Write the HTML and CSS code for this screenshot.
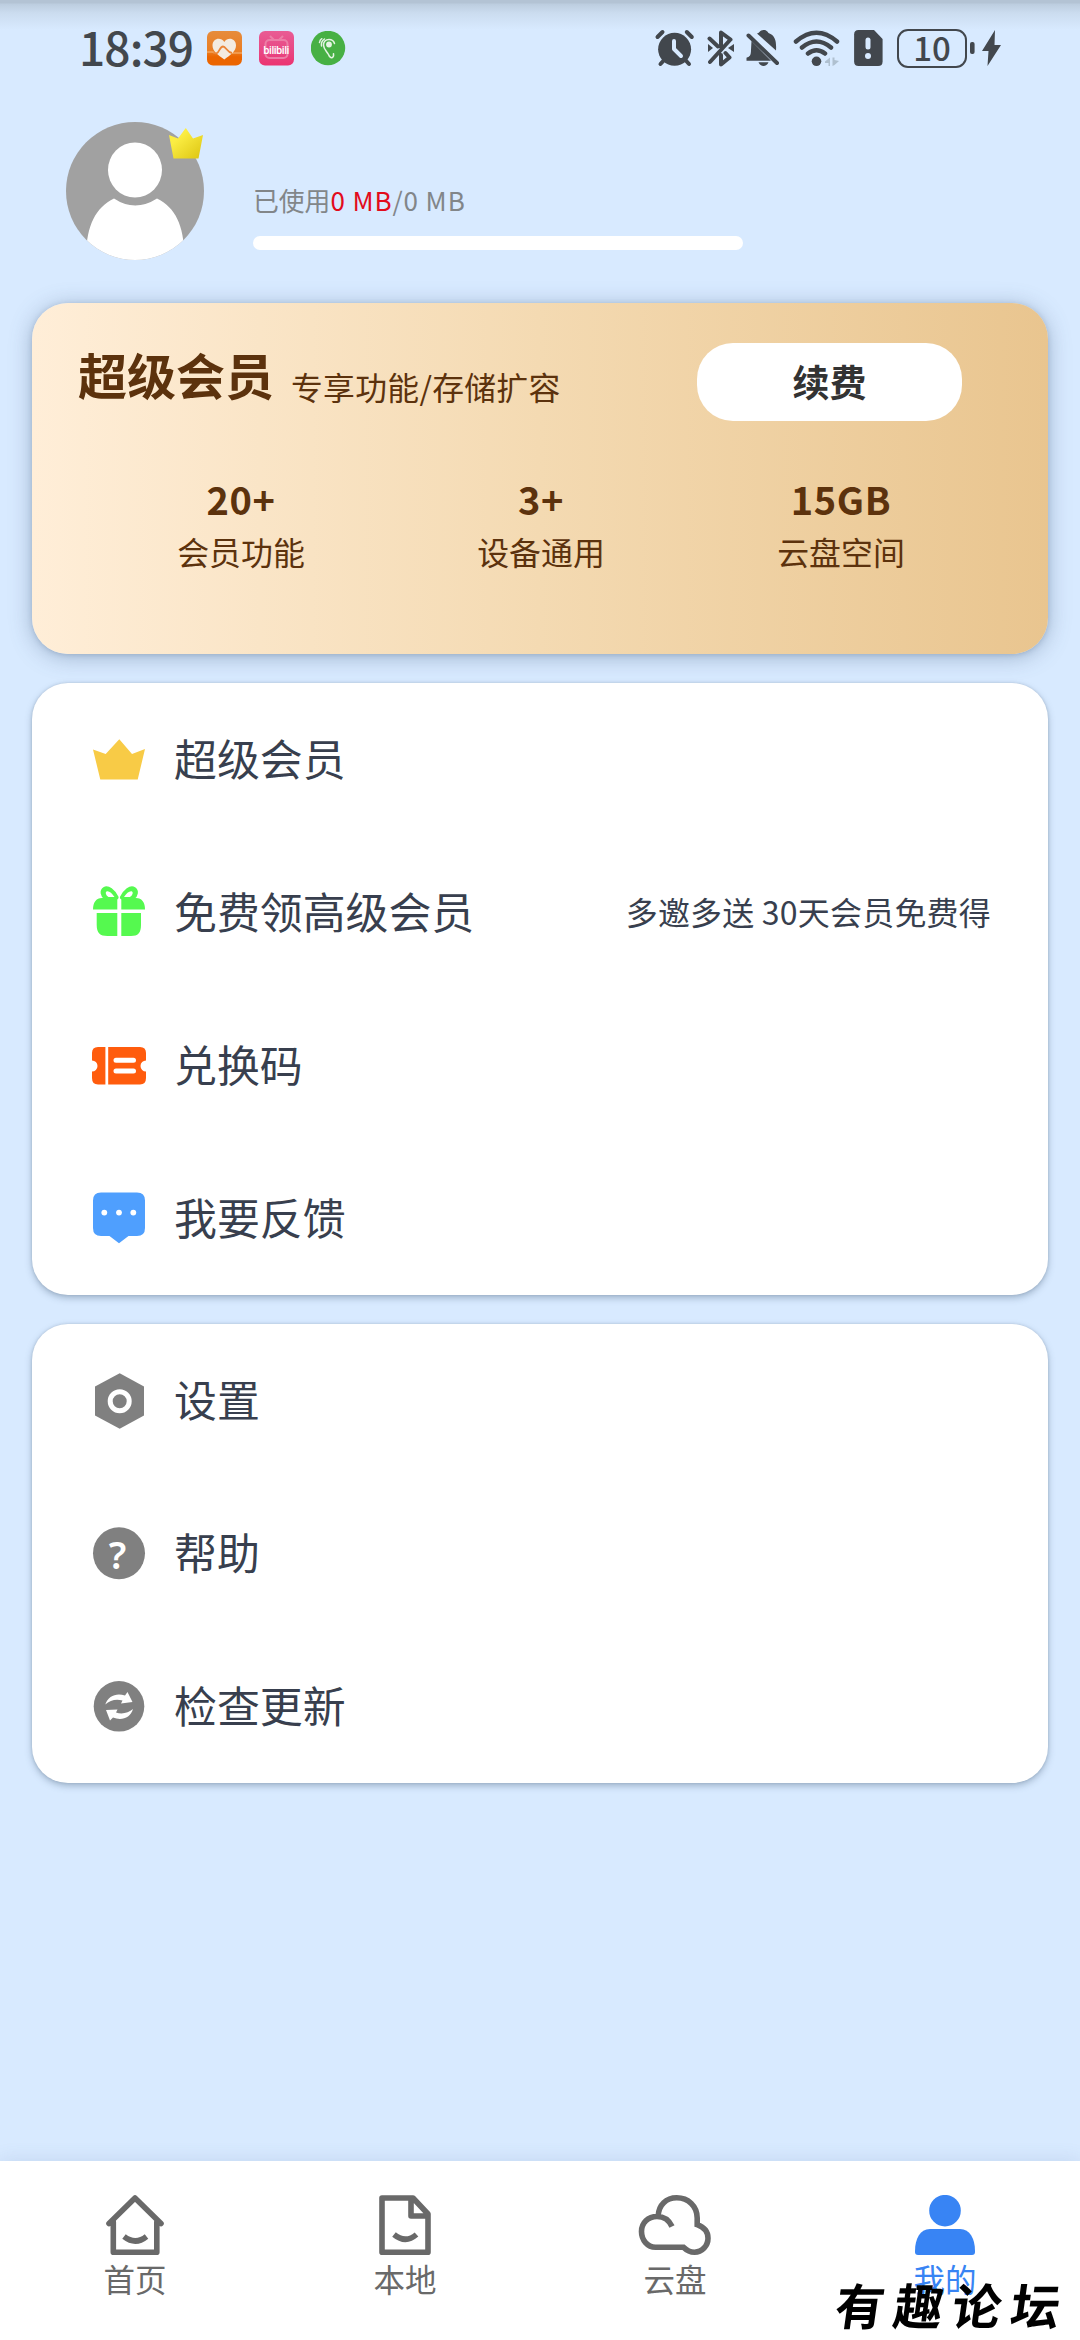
FILE: index.html
```html
<!DOCTYPE html>
<html lang="zh-CN">
<head>
<meta charset="utf-8">
<title>我的</title>
<link rel="stylesheet" href="styles.css">
</head>
<body>
<div class="screen">
  <header class="status">
    <div class="status-left">
      <span class="time">18:39</span>
      <svg class="app" viewBox="207 31 35 35">
        <defs><linearGradient id="or" x1="0" y1="0" x2="0" y2="1"><stop offset="0" stop-color="#e68c3c"/><stop offset=".6" stop-color="#ea7d22"/><stop offset=".75" stop-color="#eb6500"/></linearGradient></defs>
        <rect x="207" y="31" width="35" height="34.500" rx="6" fill="url(#or)"/>
        <path d="M207 52h5c3 0 3 2 5 1M232 53h10" fill="none" stroke="#f3a45c" stroke-width="1.600"/>
        <path d="M224.300 59.500C218 55 212.500 51 212.500 45.500 212.500 38 221 36.500 224.300 42 227.500 36.500 236 38 236 45.500 236 51 230.500 55 224.300 59.500Z" fill="#f3ebe0"/>
        <path d="M213.500 52.500q2 1.500 3.500.5c2.500-1.500 3-6.500 6-6.500s4 6 9 6.500" fill="none" stroke="#ea8436" stroke-width="1.800"/>
      </svg>
      <svg class="app" viewBox="259 31 35 35">
        <defs><linearGradient id="pk" x1="0" y1="0" x2="0" y2="1"><stop offset="0" stop-color="#e95c94"/><stop offset=".6" stop-color="#e84683"/><stop offset="1" stop-color="#ec3370"/></linearGradient></defs>
        <rect x="259" y="31" width="35" height="34.500" rx="6" fill="url(#pk)"/>
        <path d="M270 36l4 4m9-4l-4 4" stroke="#ec7ea7" stroke-width="2"/>
        <rect x="265.500" y="40" width="22" height="18" rx="4" fill="none" stroke="#ec7ea7" stroke-width="2"/>
        <text class="bili" x="276.300" y="54" text-anchor="middle" textLength="26">bilibili</text>
      </svg>
      <svg class="app" viewBox="311 31 35 35">
        <circle cx="328" cy="48" r="17.200" fill="#47b044"/>
        <g fill="none" stroke="#e5f4e3" stroke-width="1.500" stroke-linecap="round"><path d="M334.500 43.500c-1-3.500-4-4-5.500-4-3.500 0-5.500 2.500-5.500 5.500 0 4 3 6 5 9.500 1 2.500 2 3.500 3.500 3.200 1.300-.3 1.800-2 1.500-4"/><path d="M321.500 46c-.5-3 .8-5.500 3-7M319.500 42.500c.3-2 1.300-3.300 2.300-3.800"/></g>
        <circle cx="329" cy="44.500" r="2.900" fill="#e5f4e3"/>
      </svg>
    </div>
    <div class="status-right">
      <svg class="s-alarm" viewBox="653 28 41 40">
        <circle cx="673.600" cy="49.300" r="16.500" fill="#42474d"/>
        <path d="M656.500 37l5-5M690.800 37l-5-5M664 59l-4.500 5M683.500 59l4.500 5" stroke="#42474d" stroke-width="4" stroke-linecap="round"/>
        <path d="M673 41v8l7 7" fill="none" stroke="#d8eaff" stroke-width="4" stroke-linecap="round" stroke-linejoin="round"/>
      </svg>
      <svg class="s-bt" viewBox="706 28 28 40">
        <path d="M708.500 38.500l8.500 8M720 47V32.500l9.500 7-20.500 22.500M720 55v9.500l8.500-7-4-4.500" fill="none" stroke="#42474d" stroke-width="4" stroke-linecap="round" stroke-linejoin="round"/>
        <path d="M707 44v8l5-4zM733 44v8l-6-4z" fill="#42474d"/>
      </svg>
      <svg class="s-bell" viewBox="745 28 34 40">
        <path d="M756 33.500c2 0 3-3.500 6.500-3.500s4 2 5 3c7 2.500 8 8.500 7.500 17.500zM750.500 41l19.500 19.800h-24.500v-3c3-1 4.500-2 4.500-8z" fill="#42474d"/>
        <path d="M747.500 35.500l28.500 27.500" stroke="#42474d" stroke-width="4" stroke-linecap="round"/>
        <path d="M757.500 62.200h10c-2 5-8 5-10 0z" fill="#42474d"/>
      </svg>
      <svg class="s-wifi" viewBox="791 28 48 40">
        <circle cx="815.500" cy="61.300" r="4.800" fill="#42474d"/>
        <path d="M795 41.500q20.500-17.500 41 0M801 47.500q14.500-12 29 0M807 53.500q8.500-6.500 17 0" fill="none" stroke="#42474d" stroke-width="4.500" stroke-linecap="round"/>
        <path d="M829 57.500v8.500h-1.500v-3h-3.500v-1.500zM831.500 66v-8.500h2v2.500l4.500 1-4.500 4z" fill="#afc0d0"/>
      </svg>
      <svg class="s-sim" viewBox="852 28 31 40">
        <path d="M857.500 30H873l8.600 9v22.500q0 4.500-4.500 4.500h-19.500q-4.500 0-4.500-4.500V34.500q0-4.500 4.400-4.500z" fill="#42474d"/>
        <path d="M867 40v7" stroke="#d8eaff" stroke-width="5" stroke-linecap="round"/><circle cx="867" cy="56" r="3" fill="#d8eaff"/>
      </svg>
      <span class="battery">10</span>
      <svg class="s-bolt" viewBox="968 28 33 40">
        <rect x="969" y="42" width="4.600" height="12" rx="2" fill="#42474d"/>
        <path d="M994 30l-13 21h6.500l-1 15 13.500-21h-6.500z" fill="#42474d"/>
      </svg>
    </div>
  </header>

  <section class="profile">
    <div class="avatar">
      <svg viewBox="0 0 138 138" width="138" height="138">
        <defs><clipPath id="av"><circle cx="69" cy="69" r="69"/></clipPath></defs>
        <g clip-path="url(#av)"><path d="M0 0h138v138H0z" fill="#a1a1a1"/>
        <path d="M48 76.500Q69 90.500 91 76.500C110 86 118.500 104 118.500 138H20C20 104 29 86 48 76.500Z" fill="#fff"/>
        <ellipse cx="69" cy="48" rx="27" ry="27.500" fill="#fff"/></g>
      </svg>
      <svg class="avatar-crown" viewBox="0 0 34 31">
        <defs><linearGradient id="cr" x1="0" y1="0" x2="1" y2="1"><stop offset=".3" stop-color="#fbed43"/><stop offset="1" stop-color="#dcc410"/></linearGradient></defs>
        <path d="M0 7l9 3.500L16.800 0 24 10.500 34 7l-4.500 23.500H4.500z" fill="url(#cr)"/>
      </svg>
    </div>
    <div class="usage">
      <p class="usage-text">已使用<span class="latin"><em>0 MB</em>/0 MB</span></p>
      <div class="bar"></div>
    </div>
  </section>

  <section class="vip">
    <div class="vip-head">
      <h1>超级会员</h1>
      <p>专享功能/存储扩容</p>
      <button class="renew">续费</button>
    </div>
    <div class="stats">
      <div class="stat"><b>20+</b><span>会员功能</span></div>
      <div class="stat"><b>3+</b><span>设备通用</span></div>
      <div class="stat"><b>15GB</b><span>云盘空间</span></div>
    </div>
  </section>

  <section class="list">
    <div class="row">
      <svg viewBox="0 0 56 56"><path d="M28.300 7.300L41 22l13-5-7.300 30.500H9.300L2 17.500 14.700 22z" fill="#f8cb46"/></svg>
      <span>超级会员</span>
    </div>
    <div class="row">
      <svg viewBox="0 0 56 56">
        <g fill="#55f94f"><path d="M2 24.500c0-7 3-11.500 9-11.500h15.300v11.500zM30.300 24.500V13H45c6 0 9 4.500 9 11.500zM5.700 28h20.600v23H16.500C9 51 5.700 48 5.700 40zM30.300 28H50v12c0 8-3 11-10 11h-9.700z"/></g>
        <path d="M25.500 12.500C22 6 17 2 13.500 4c-3 2-2 6 1 8.500zM31 12.500C34.500 6 39.500 2 43 4c3 2 2 6-1 8.500z" fill="#55f94f" stroke="#55f94f" stroke-width="4.200" stroke-linejoin="round"/>
        <path d="M23.500 12c-2.500-4-6-6.500-8-5.500-1.500 1-.5 4 2 5.500zM33 12c2.500-4 6-6.500 8-5.500 1.500 1 .5 4-2 5.500z" fill="#fff"/>
      </svg>
      <span>免费领高级会员</span><span class="note">多邀多送 30天会员免费得</span>
    </div>
    <div class="row">
      <svg viewBox="0 0 56 56">
        <path d="M7 9h42q6 0 6 6v7.500a5.500 5.500 0 0 0 0 11V40q0 6.500-6 6.500H7q-6 0-6-6.500v-6.500a5.500 5.500 0 0 0 0-11V15q0-6 6-6z" fill="#ff5c0d"/>
        <path d="M15.800 9v38" stroke="#fff" stroke-width="2.800"/><path d="M25 22.200h17.500M25 33h17.500" stroke="#fff" stroke-width="5" stroke-linecap="round"/>
      </svg>
      <span>兑换码</span>
    </div>
    <div class="row">
      <svg viewBox="0 0 56 56"><path d="M10 1.500h36q8 0 8 8V37q0 8-8 8h-8.500L28 52.300 18.500 45H10q-8 0-8-8V9.500q0-8 8-8z" fill="#4f9ffe"/><g fill="#fff"><circle cx="13.300" cy="21.600" r="2.900"/><circle cx="28" cy="21.600" r="2.900"/><circle cx="42.300" cy="21.600" r="2.900"/></g></svg>
      <span>我要反馈</span>
    </div>
  </section>

  <section class="list">
    <div class="row">
      <svg viewBox="0 0 56 56"><path d="M28.700 .2L53 13.500v29L28.700 55.700 4 42.500v-29z" fill="#808080"/><circle cx="28.700" cy="28.200" r="9.500" fill="none" stroke="#fff" stroke-width="5"/></svg>
      <span>设置</span>
    </div>
    <div class="row">
      <svg viewBox="0 0 56 56"><circle cx="28" cy="27.300" r="26" fill="#808080"/><text class="mark" x="26.500" y="42.500" text-anchor="middle">?</text></svg>
      <span>帮助</span>
    </div>
    <div class="row">
      <svg viewBox="0 0 56 56"><circle cx="28" cy="27.300" r="25.300" fill="#808080"/><path d="M14.300 25.500C17 16.500 26 13.500 34 16.500L36.500 13 41.500 23 30 24.500 31.500 21.500C25.500 19.500 19 21 14.300 25.500ZM42 30C39.500 39 30.500 42 22 38.500L19 41.500 15 31 26.500 30.500 25 33.500C31 35.500 37.500 34 42 30Z" fill="#fff"/></svg>
      <span>检查更新</span>
    </div>
  </section>

  <nav class="tabs">
    <div class="tab">
      <svg viewBox="105 2195 60 60"><g fill="none" stroke="#696969" stroke-width="5.600" stroke-linecap="round" stroke-linejoin="round"><path d="M109 2223.500l26-25.500 26 25.500M113.300 2222v30.200h43.500V2222"/><path d="M124 2236.500q11.500 9 22.500 0" stroke-linecap="butt"/></g></svg>
      <span>首页</span>
    </div>
    <div class="tab">
      <svg viewBox="375 2195 60 60"><g fill="none" stroke="#696969" stroke-width="5.600" stroke-linejoin="round"><path d="M382 2198h31l15 16v38.200h-46zM411 2198v18h17"/><path d="M394 2234.500q11.500 9.500 22.500 0"/></g></svg>
      <span>本地</span>
    </div>
    <div class="tab">
      <svg class="wide" viewBox="637 2195 76 60"><path d="M672 2226.500c-3-6.500-8.500-10-15-10-9 0-15.500 6.500-15.500 15s6 15.700 14 15.700H683.500c3.500 3.500 7 5 11 5 7.500 0 13.500-6.500 13.500-14 0-6-4-11-10.800-13.500V2218c0-12-9-20.200-20.500-20.200-10.500 0-18 7-18.500 18" fill="none" stroke="#696969" stroke-width="5.600"/></svg>
      <span>云盘</span>
    </div>
    <div class="tab active">
      <svg viewBox="915 2195 60 60"><g fill="#3884f4"><circle cx="945" cy="2210.700" r="15.800"/><path d="M930 2229h30c10 0 15 10 15 22v1q0 3-3 3h-54q-3 0-3-3v-1c0-12 5-22 15-22z"/></g></svg>
      <span>我的</span>
    </div>
    <div class="watermark">有趣论坛</div>
  </nav>
</div>
</body>
</html>
```
FILE: styles.css
```css
* { box-sizing: border-box; margin: 0; padding: 0; }
body { background: #d8eaff; font-family: "Noto Sans CJK SC", "Noto Sans", sans-serif; }
svg { display: block; flex: none; }

.screen {
  width: 1080px; height: 2340px; overflow: hidden;
  display: flex; flex-direction: column;
  background: linear-gradient(#b3c3d4 0, #b3c3d4 3px, #bccddf 4px, #cbdcef 13px, #d8eaff 30px);
}

.status { height: 96px; flex: none; display: flex; justify-content: space-between; padding: 0 78px 0 79px; }
.status-left { display: flex; align-items: center; gap: 17px; height: 97px; }
.time { width: 111px; font-size: 46px; font-weight: 500; line-height: 92px; padding-bottom: 5px; letter-spacing: -0.9px; color: #42474d; white-space: nowrap; }
.app { width: 35px; height: 35px; }
.bili { font: 600 10px "Noto Sans", sans-serif; fill: #fff; }
.status-right { display: flex; align-items: center; height: 96px; }
.s-alarm { width: 41px; height: 40px; }
.s-bt { width: 28px; height: 40px; margin-left: 12px; }
.s-bell { width: 34px; height: 40px; margin-left: 11px; }
.s-wifi { width: 48px; height: 40px; margin-left: 12px; }
.s-sim { width: 31px; height: 40px; margin-left: 13px; }
.battery {
  width: 70px; height: 39px; margin: 0 2px 0 13px; border: 2.5px solid #42474d; border-radius: 11px;
  font-size: 33px; font-weight: 500; line-height: 32px; text-align: center; color: #42474d;
}
.s-bolt { width: 33px; height: 40px; }

.profile { height: 207px; flex: none; display: flex; padding: 26px 0 0 66px; }
.avatar { position: relative; width: 138px; height: 138px; }
.avatar-crown { position: absolute; left: 103px; top: 6px; width: 34px; height: 31px; }
.usage { width: 490px; margin-left: 49px; padding-top: 59px; }
.usage-text { height: 38px; line-height: 38px; font-size: 25.800px; color: #828689; white-space: nowrap; }
.usage-text em { font-style: normal; color: #e20c1c; }
.latin { font-size: 26px; letter-spacing: 0.9px; }
.bar { height: 14px; margin-top: 17px; border-radius: 7px; background: #fff; }

.vip {
  height: 351px; flex: none; margin: 0 32px; border-radius: 36px; padding: 40px 86px 0 46px; color: #5c320d;
  background: linear-gradient(90deg, #ffeed8, #f4dab2 50%, #e9c58f);
  box-shadow: 0 3px 22px rgba(80, 105, 135, .42), 0 1px 5px rgba(80, 105, 135, .25);
}
.vip-head { display: flex; height: 78px; }
.vip-head h1 { font-size: 49px; line-height: 62px; font-weight: 700; }
.vip-head p { margin-left: 17px; font-size: 31.800px; line-height: 86px; letter-spacing: 0.3px; white-space: nowrap; }
.renew {
  width: 265px; height: 78px; margin-left: auto; border: 0; border-radius: 36px; background: #fff;
  font: 700 37px/76px "Noto Sans CJK SC", sans-serif; color: #333; padding-bottom: 2px;
}
.stats { display: grid; grid-template-columns: repeat(3, 300px); margin: 52px 0 0 13px; }
.stat { display: flex; flex-direction: column; text-align: center; }
.stat b { font-size: 38px; line-height: 52px; letter-spacing: .6px; }
.stat span { font-size: 31.900px; line-height: 52px; }

.list {
  flex: none; margin: 29px 32px 0; border-radius: 36px; background: #fff; color: #383f4e;
  box-shadow: 0 3px 7px rgba(60, 85, 110, .36), 0 0 3px rgba(60, 85, 110, .2);
}
.row { height: 153px; display: flex; align-items: center; padding: 0 57px 0 59px; font-size: 42.900px; }
.row svg { width: 56px; height: 56px; margin-right: 27px; }
.row span { padding-bottom: 5px; }
.row .note { margin-left: auto; font-size: 32px; letter-spacing: .2px; padding-bottom: 4px; }
.mark { font: 600 38px "Noto Sans", sans-serif; fill: #fff; }

.tabs {
  position: relative; height: 179px; flex: none; margin-top: auto; padding-top: 34px;
  display: grid; grid-template-columns: repeat(4, 270px); background: #fff;
  box-shadow: 0 0 18px rgba(80, 105, 160, .16);
}
.tab { display: flex; flex-direction: column; align-items: center; color: #696969; font-size: 31.500px; }
.tab svg { width: 60px; height: 60px; }
.tab svg.wide { width: 76px; }
.tab span { line-height: 46px; }
.tab.active { color: #3884f4; }
.watermark {
  position: absolute; left: 836px; top: 110px; white-space: nowrap; color: #000;
  font-size: 49px; font-weight: 700; line-height: 66px; letter-spacing: 9.500px;
  transform: skewX(-8deg);
}
```
